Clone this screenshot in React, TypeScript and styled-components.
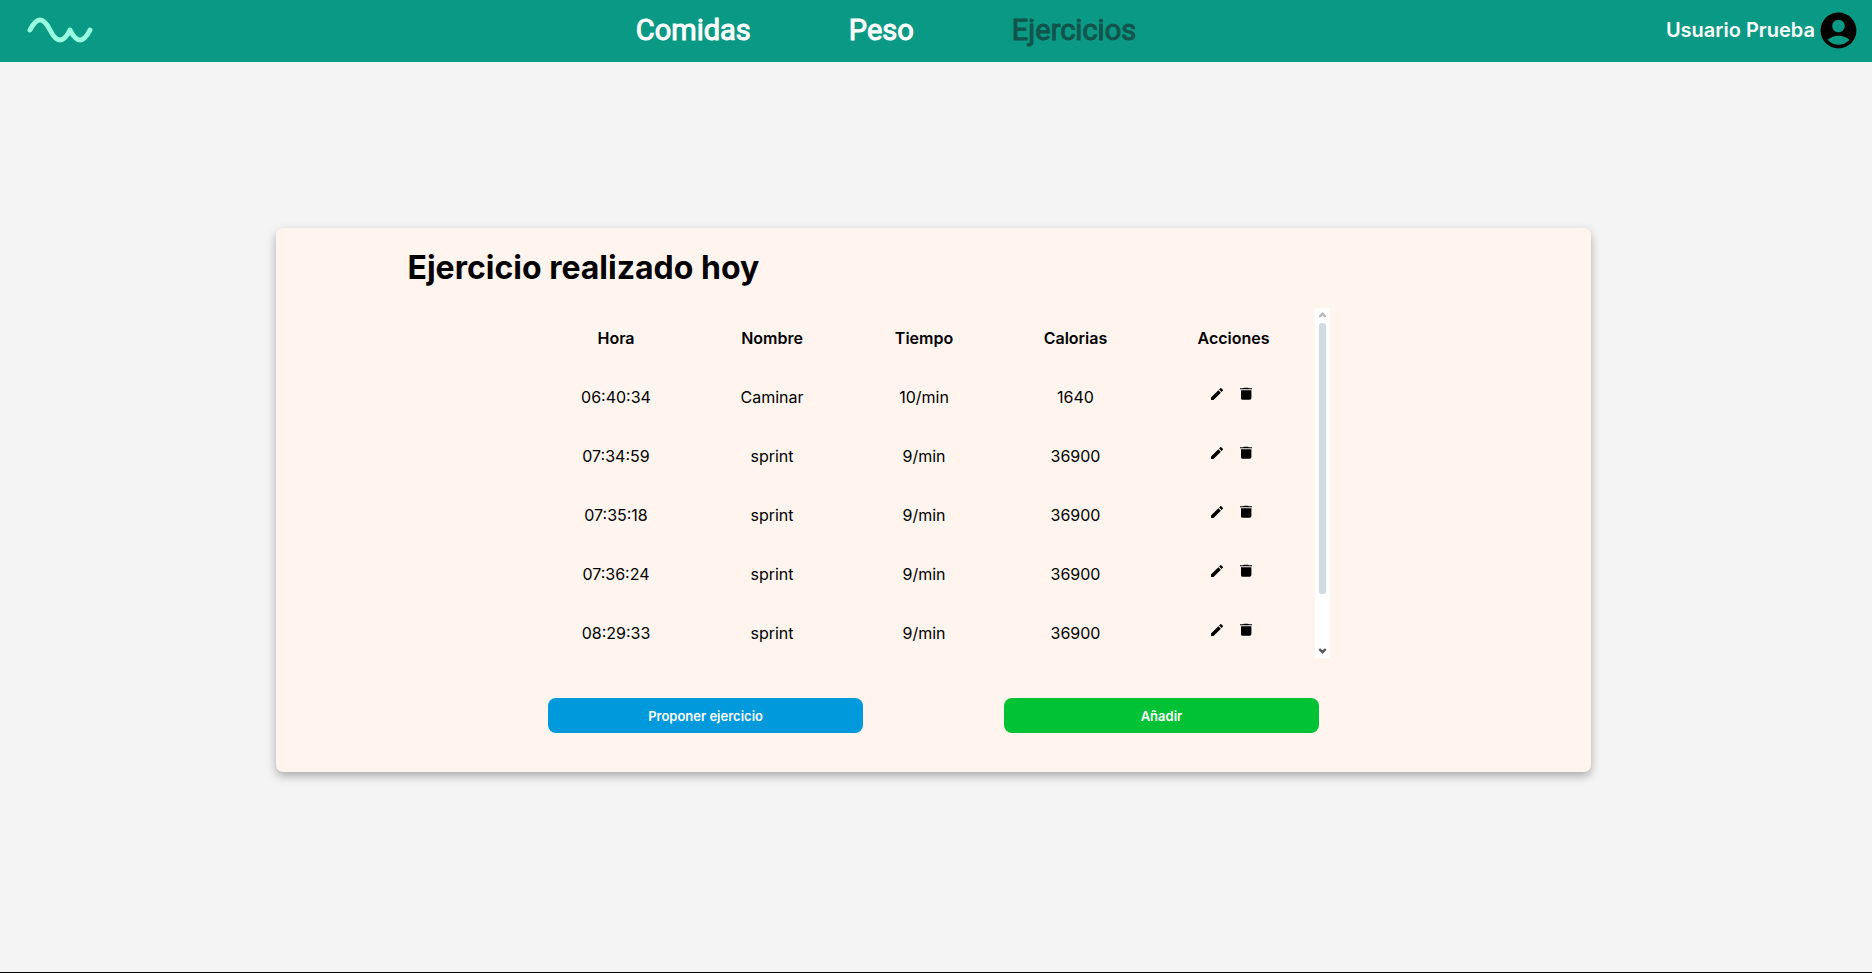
import React from "react";
import styled, { createGlobalStyle } from "styled-components";
import { MdAccountCircle, MdEdit } from "react-icons/md";

const GlobalStyle = createGlobalStyle`
  * { box-sizing: border-box; }
  body {
    margin: 0;
    background: #f4f4f4;
    color: #000;
    font-family: Inter, "Liberation Sans", sans-serif;
  }
  button { font-family: inherit; cursor: pointer; }
`;

const Page = styled.div`
  min-height: 100vh;
  display: flex;
  flex-direction: column;
  border-bottom: 1px solid #000;
`;

const NavBar = styled.header`
  height: 62px;
  flex: none;
  display: grid;
  grid-template-columns: 1fr auto 1fr;
  align-items: center;
  padding: 0 12px 2px 24px;
  background: #099984;
`;

const LogoLink = styled.a`
  display: flex;
  width: 72px;
`;

const NavLinks = styled.nav`
  display: flex;
  gap: 98px;
  margin-right: 112px;
`;

const NavLink = styled.a<{ $active?: boolean }>`
  font-family: Roboto, sans-serif;
  font-size: 29px;
  line-height: 34px;
  font-weight: 400;
  -webkit-text-stroke: 1px currentColor;
  color: ${(p) => (p.$active ? "#12544b" : "#fff")};
  text-decoration: none;
`;

const UserButton = styled.button`
  justify-self: end;
  display: flex;
  align-items: center;
  gap: 2px;
  padding: 0;
  border: 0;
  background: none;
  color: #fff;
  font-size: 20px;
  font-weight: 600;

  svg { color: #000; }
`;

const Main = styled.main`
  flex: 1;
  display: flex;
  align-items: center;
  justify-content: center;
  padding: 0 5px 34px 0;
`;

const Card = styled.section`
  width: 1315px;
  max-width: 100%;
  padding: 20px 0 39px;
  border-radius: 7px;
  background: #fff5ee;
  box-shadow: 0 4px 10px rgba(0, 0, 0, 0.3);
`;

const CardBody = styled.div`
  width: 80%;
  margin: 0 auto;
`;

const Title = styled.h1`
  margin: 0 0 20px;
  font-size: 32px;
  line-height: 40px;
  font-weight: 700;
`;

const ScrollFrame = styled.div`
  display: flex;
  width: fit-content;
  height: 350px;
  margin: 0 auto 40px;
`;

const TableViewport = styled.div`
  overflow-y: auto;
  scrollbar-width: none;
`;

const Table = styled.table`
  width: 778px;
  table-layout: fixed;
  border-collapse: collapse;
  text-align: center;
  font-size: 16px;
`;

const Column = styled.col<{ $width: number }>`
  width: ${(p) => p.$width}px;
`;

const Row = styled.tr`
  height: 59px;
`;

const HeadCell = styled.th`
  padding: 0;
  font-weight: 600;
`;

const Cell = styled.td`
  padding: 0;
  font-weight: 400;
`;

const Actions = styled.div`
  display: flex;
  justify-content: center;
  gap: 13px;
  padding: 0 4px 6px 0;
`;

const IconButton = styled.button`
  display: flex;
  padding: 0;
  border: 0;
  background: none;
  color: #000;
`;

const ScrollTrack = styled.div`
  width: 15px;
  display: flex;
  flex-direction: column;
  align-items: center;
  background: #fff;
`;

const ScrollThumb = styled.div`
  width: 7px;
  height: 271px;
  margin-bottom: auto;
  border-radius: 3px;
  background: #cfdae3;
`;

const ButtonRow = styled.div`
  display: flex;
  justify-content: space-evenly;
`;

const ActionButton = styled.button<{ $tone: string }>`
  width: 30%;
  height: 35px;
  border: 0;
  border-radius: 8px;
  background: ${(p) => p.$tone};
  color: #fff;
  font-size: 13px;
  font-weight: 600;
`;

const columns = [
  { label: "Hora", width: 158 },
  { label: "Nombre", width: 154 },
  { label: "Tiempo", width: 150 },
  { label: "Calorias", width: 153 },
  { label: "Acciones", width: 163 },
];

const exercises = [
  ["06:40:34", "Caminar", "10/min", "1640"],
  ["07:34:59", "sprint", "9/min", "36900"],
  ["07:35:18", "sprint", "9/min", "36900"],
  ["07:36:24", "sprint", "9/min", "36900"],
  ["08:29:33", "sprint", "9/min", "36900"],
];

const Logo = () => (
  <svg width="72" height="32" viewBox="0 0 72 32" fill="none" stroke="#98ffe0" strokeWidth="5" strokeLinecap="round" strokeLinejoin="round">
    <path d="M6 16 Q16 -4 26 16 T46 16 Q56 36 66 16" />
  </svg>
);

const TrashIcon = () => (
  <svg width="16" height="16" viewBox="0 0 16 16" fill="currentColor">
    <path d="M2 3V2.3h3.200L6 1.800h4l.8.5H14V3.200H2zM3 4.300h10.400v7.700a1.800 1.800 0 0 1-1.800 1.800H4.600a1.600 1.600 0 0 1-1.600-1.600z" />
  </svg>
);

const Chevron = ({ down }: { down?: boolean }) => (
  <svg width="15" height="15" viewBox="0 0 15 15" fill="none" stroke={down ? "#555" : "#b8b8b8"} strokeWidth="2.400">
    <path d={down ? "M4.300 6l3.200 3.200 3.200-3.200" : "M4.300 9l3.200-3.200 3.200 3.200"} />
  </svg>
);

export default function App() {
  return (
    <Page>
      <GlobalStyle />
      <NavBar>
        <LogoLink href="#" aria-label="Inicio"><Logo /></LogoLink>
        <NavLinks>
          <NavLink href="#comidas">Comidas</NavLink>
          <NavLink href="#peso">Peso</NavLink>
          <NavLink href="#ejercicios" $active>Ejercicios</NavLink>
        </NavLinks>
        <UserButton type="button">
          Usuario Prueba
          <MdAccountCircle size={43} />
        </UserButton>
      </NavBar>
      <Main>
        <Card>
          <CardBody>
            <Title>Ejercicio realizado hoy</Title>
            <ScrollFrame>
              <TableViewport>
                <Table>
                  <colgroup>
                    {columns.map((c) => <Column key={c.label} $width={c.width} />)}
                  </colgroup>
                  <thead>
                    <Row>
                      {columns.map((c) => <HeadCell key={c.label} scope="col">{c.label}</HeadCell>)}
                    </Row>
                  </thead>
                  <tbody>
                    {exercises.map((values) => (
                      <Row key={values[0]}>
                        {values.map((v, i) => <Cell key={i}>{v}</Cell>)}
                        <Cell>
                          <Actions>
                            <IconButton type="button" aria-label="Editar"><MdEdit size={16} /></IconButton>
                            <IconButton type="button" aria-label="Eliminar"><TrashIcon /></IconButton>
                          </Actions>
                        </Cell>
                      </Row>
                    ))}
                  </tbody>
                </Table>
              </TableViewport>
              <ScrollTrack aria-hidden="true">
                <Chevron />
                <ScrollThumb />
                <Chevron down />
              </ScrollTrack>
            </ScrollFrame>
            <ButtonRow>
              <ActionButton type="button" $tone="#0099dc">Proponer ejercicio</ActionButton>
              <ActionButton type="button" $tone="#00c234">Añadir</ActionButton>
            </ButtonRow>
          </CardBody>
        </Card>
      </Main>
    </Page>
  );
}
